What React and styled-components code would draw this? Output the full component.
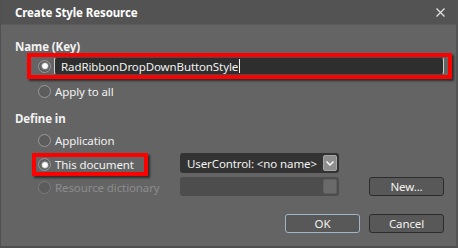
import React from 'react';
import styled, { createGlobalStyle, css } from 'styled-components';

const Global = createGlobalStyle`
  html, body {
    margin: 0;
    padding: 0;
    background: #646464;
  }
  body {
    font-family: "Noto Sans", "Open Sans", sans-serif;
    font-size: 11.5px;
    letter-spacing: -0.1px;
    color: #f2f2f2;
  }
`;

const Dialog = styled.div`
  width: 458px;
  height: 248px;
  box-sizing: border-box;
  background: #646464;
  border-left: 1px solid #505050;
  border-right: 2px solid #545454;
  border-bottom: 2px solid #4e4e4e;
  display: flex;
  flex-direction: column;
`;

const TitleBar = styled.div`
  height: 24px;
  flex: none;
  background: #535353;
  display: flex;
  align-items: center;
  justify-content: space-between;
  padding: 0 11px 0 14px;
  box-shadow: 0 1px 0 #5a5a5a;
`;

const Title = styled.div`
  font-weight: 700;
  color: #ffffff;
`;

const Close = styled.svg`
  width: 9px;
  height: 9px;
  margin-top: 1px;
`;

const Body = styled.div`
  flex: 1;
  padding: 16px 12px 0 14px;
  display: flex;
  flex-direction: column;
`;

const SectionLabel = styled.div`
  font-weight: 700;
  height: 14px;
  line-height: 14px;
  margin-top: ${(p) => p.$mt || 0}px;
  margin-bottom: ${(p) => p.$mb || 0}px;
`;

const Highlight = styled.div`
  border: 4px solid #ff0000;
  box-shadow: 2px 2px 2px rgba(0, 0, 0, 0.55);
  display: flex;
  align-items: center;
  box-sizing: border-box;
  flex: none;
  ${(p) => css`
    width: ${p.$w}px;
    height: ${p.$h}px;
    margin-left: ${p.$ml}px;
  `}
`;

const RadioRow = styled.label`
  display: flex;
  align-items: center;
  gap: 4px;
  height: 14px;
  white-space: nowrap;
  color: ${(p) => (p.$disabled ? '#8c8c8c' : '#f2f2f2')};
`;

const RadioCircle = styled.span`
  width: 11px;
  height: 11px;
  border-radius: 50%;
  border: 1px solid ${(p) => (p.$disabled ? '#7a7a7a' : '#9a9a9a')};
  background: #5c5c5c;
  display: flex;
  align-items: center;
  justify-content: center;
  flex: none;
  &::after {
    content: '';
    width: 6px;
    height: 6px;
    border-radius: 50%;
    background: radial-gradient(circle, #ffffff 40%, #d8d8d8 100%);
    box-shadow: 0 0 2px #ffffff;
    display: ${(p) => (p.$checked ? 'block' : 'none')};
  }
`;

const RowIndent = styled.div`
  display: flex;
  align-items: center;
  box-sizing: border-box;
  height: ${(p) => p.$h || 14}px;
  flex: none;
  padding-left: ${(p) => (p.$pl !== undefined ? p.$pl : 23)}px;
  margin-top: ${(p) => p.$mt || 0}px;
  width: ${(p) => (p.$w ? `${p.$w}px` : 'auto')};
`;

const TextBox = styled.div`
  flex: 1;
  height: 18px;
  margin-left: 3px;
  margin-right: 4px;
  background: #2e2e2e;
  border: 1px solid #4a4a4a;
  border-left-color: #d0d0d0;
  border-right-color: #d0d0d0;
  border-radius: 3px;
  display: flex;
  align-items: center;
  padding-left: 6px;
  box-sizing: border-box;
`;

const Caret = styled.span`
  width: 1px;
  height: 14px;
  background: #f0f0f0;
  margin-left: 1px;
`;

const Row = styled.div`
  display: flex;
  align-items: ${(p) => p.$align || 'center'};
  margin-top: ${(p) => p.$mt || 0}px;
`;

const Select = styled.div`
  width: 159px;
  height: ${(p) => (p.$disabled ? 19 : 20)}px;
  box-sizing: border-box;
  border-radius: 3px;
  background: ${(p) => (p.$disabled ? '#4d4d4d' : '#333333')};
  display: flex;
  align-items: center;
  justify-content: space-between;
  padding: 0 2px 0 7px;
  margin-left: ${(p) => p.$ml || 0}px;
  white-space: nowrap;
  flex: none;
`;

const Arrow = styled.span`
  width: 14px;
  height: ${(p) => (p.$disabled ? 15 : 16)}px;
  border-radius: 2px;
  background: ${(p) => (p.$disabled ? '#6a6a6a' : '#8e8e8e')};
  border: 1px solid ${(p) => (p.$disabled ? '#5e5e5e' : '#a6a6a6')};
  box-sizing: border-box;
  display: flex;
  align-items: center;
  justify-content: center;
`;

const Button = styled.button`
  width: 75px;
  height: 19px;
  box-sizing: border-box;
  border-radius: 3px;
  border: 1px solid ${(p) => (p.$default ? '#9db6cc' : '#2c2c2c')};
  background: #585858;
  color: #f2f2f2;
  font: inherit;
  letter-spacing: inherit;
  padding: 0;
  margin-left: ${(p) => p.$ml || 0}px;
  display: flex;
  align-items: center;
  justify-content: center;
  flex: none;
`;

const Footer = styled.div`
  display: flex;
  justify-content: flex-end;
  gap: 9px;
  margin-top: 17px;
`;

const Radio = ({ checked, disabled, children }) => (
  <RadioRow $disabled={disabled}>
    <RadioCircle $checked={checked} $disabled={disabled} />
    {children}
  </RadioRow>
);

export default function App() {
  return (
    <>
      <Global />
      <Dialog>
        <TitleBar>
          <Title>Create Style Resource</Title>
          <Close viewBox="0 0 9 9">
            <path d="M0.5 0.5L8.5 8.5M8.5 0.5L0.5 8.5" stroke="#e0e0e0" strokeWidth="1.3" />
          </Close>
        </TitleBar>
        <Body>
          <SectionLabel $mb={-1}>Name (Key)</SectionLabel>
          <Highlight $w={425} $h={26} $ml={12}>
            <RowIndent $pl={7}>
              <RadioCircle $checked />
            </RowIndent>
            <TextBox>
              RadRibbonDropDownButtonStyle
              <Caret />
            </TextBox>
          </Highlight>
          <RowIndent $mt={5}>
            <Radio>Apply to all</Radio>
          </RowIndent>
          <SectionLabel $mt={14}>Define in</SectionLabel>
          <RowIndent $mt={7}>
            <Radio>Application</Radio>
          </RowIndent>
          <Row $mt={6} $align="flex-start">
            <Highlight $w={116} $h={23} $ml={17}>
              <RowIndent $pl={2}>
                <Radio checked>This document</Radio>
              </RowIndent>
            </Highlight>
            <Select $ml={32}>
              UserControl: &lt;no name&gt;
              <Arrow>
                <svg width="8" height="5" viewBox="0 0 8 5">
                  <path d="M0.5 0.5L4 4L7.5 0.5" stroke="#ffffff" strokeWidth="1.4" fill="none" />
                </svg>
              </Arrow>
            </Select>
          </Row>
          <Row $mt={1} $align="flex-start">
            <RowIndent $w={165} $h={20}>
              <Radio disabled>Resource dictionary</Radio>
            </RowIndent>
            <Select $disabled>
              <span />
              <Arrow $disabled />
            </Select>
            <Button $ml={30}>New...</Button>
          </Row>
          <Footer>
            <Button $default>OK</Button>
            <Button>Cancel</Button>
          </Footer>
        </Body>
      </Dialog>
    </>
  );
}
